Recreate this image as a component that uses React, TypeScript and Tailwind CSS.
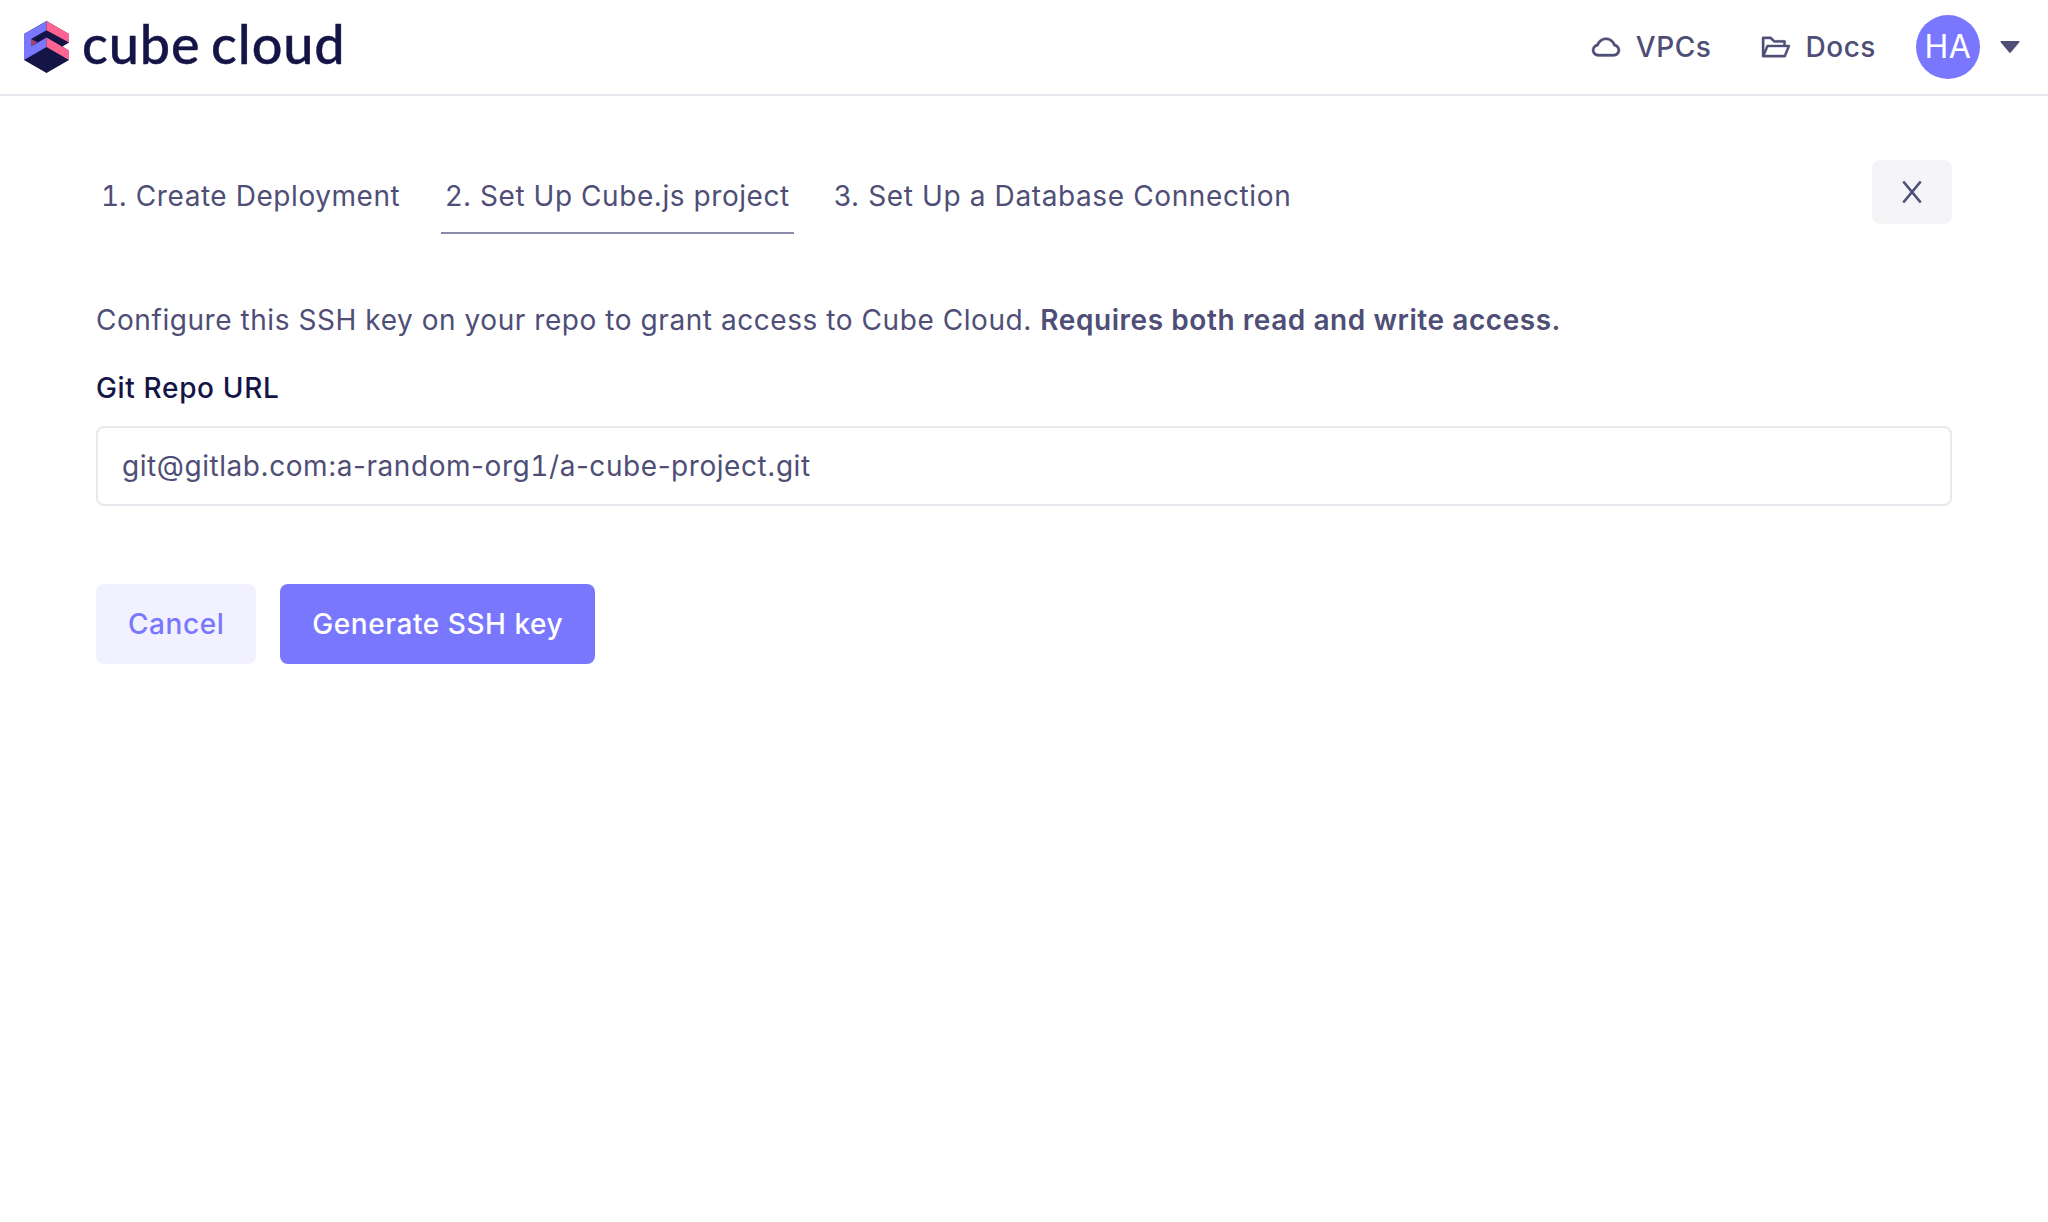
import { AiOutlineCloud, AiOutlineFolderOpen } from 'react-icons/ai';

function CubeMark() {
  return (
    <svg className="h-[52px] w-[45px]" viewBox="0.5 0 45 52">
      <path d="M23 0 45.5 13V39L23 52 .5 39V13z" fill="#141446" />
      <path d="M7.5 18 14 21.3 7.5 25.5z" fill="#a14474" />
      <path d="M23 0V9.3L7.5 18V25.5L23 16.5V26L.5 39V13z" fill="#7a77ff" />
      <path d="M23 0 45.5 13V21.5L23 9.3z" fill="#ff6492" />
      <path d="M23 16.5 45.5 29.5V39L23 26z" fill="#ff6492" />
      <path d="M46 21.3 39 25.5 46 29.8z" fill="#fff" />
    </svg>
  );
}

function Header() {
  return (
    <header className="flex h-24 items-center border-b-2 border-[#e8e8ee] pl-6 pr-7 text-[#4e4e76]">
      <CubeMark />
      <div className="mb-1.5 ml-[13px] font-['Lato',sans-serif] text-[54px] font-medium leading-[60px] tracking-[0.9px] text-[#141446] [-webkit-text-stroke:0.4px_#141446] [word-spacing:-4px]">cube cloud</div>
      <nav className="ml-auto flex items-center font-medium">
        <a className="flex items-center gap-3.5">
          <AiOutlineCloud className="size-8 stroke-[12px]" />
          <span>VPCs</span>
        </a>
        <a className="ml-[49px] flex items-center gap-[13px]">
          <AiOutlineFolderOpen className="size-8 stroke-[12px]" />
          <span>Docs</span>
        </a>
        <div className="ml-10 flex size-16 items-center justify-center rounded-full bg-[#7a77ff] text-[32px] font-normal text-white">HA</div>
        <svg className="ml-5 h-3 w-5" viewBox="0 0 20 12">
          <path d="M1.2 0H18.8Q20 .3 19.3 1.3L10.8 11.4Q10 12.2 9.2 11.4L.7 1.3Q0 .3 1.2 0Z" fill="currentColor" />
        </svg>
      </nav>
    </header>
  );
}

function CloseIcon() {
  return (
    <svg className="h-[22px] w-5" viewBox="0 0 20 22" fill="none" stroke="currentColor" strokeWidth="2.6">
      <path d="M1.3.5 18.7 21.5M18.7.5 1.3 21.5" />
    </svg>
  );
}

export default function App() {
  return (
    <div className="min-h-[1222px] bg-white font-['Inter',sans-serif] text-[28px] leading-[40px] tracking-[0.56px] text-[#4e4e76]">
      <Header />
      <main className="px-24 pt-16">
        <div className="flex h-[74px] items-start justify-between">
          <div className="ml-px flex h-[74px] gap-9">
            <div className="px-1 pt-4"><span className="tabular-nums tracking-[-0.4px]">1</span>. Create Deployment</div>
            <div className="ml-px border-b-2 border-[#8989a8] px-1 pt-4">2. Set Up Cube.js project</div>
            <div className="px-1 pt-4 tracking-[0.62px]">3. Set Up a Database Connection</div>
          </div>
          <button className="flex h-16 w-20 items-center justify-center rounded-lg bg-[#f5f5f8]">
            <CloseIcon />
          </button>
        </div>
        <p className="mt-[66px]">
          Configure this SSH key on your repo to grant access to Cube Cloud. <b className="font-semibold">Requires both read and write access.</b>
        </p>
        <label className="mt-7 block font-medium tracking-[0.66px] text-[#141446]">Git Repo URL</label>
        <div className="mt-[18px] flex h-20 items-center rounded-lg border-2 border-[#e8e8ee] px-6">
          <span>git@gitlab.com:a-random-org<span className="tabular-nums">1</span>/a-cube-project.git</span>
        </div>
        <div className="mt-[78px] flex gap-6 font-medium">
          <button className="h-20 rounded-lg bg-[#f2f1ff] px-8 text-[#7a77ff]">Cancel</button>
          <button className="h-20 rounded-lg bg-[#7a77ff] px-8 text-white">Generate SSH key</button>
        </div>
      </main>
    </div>
  );
}
